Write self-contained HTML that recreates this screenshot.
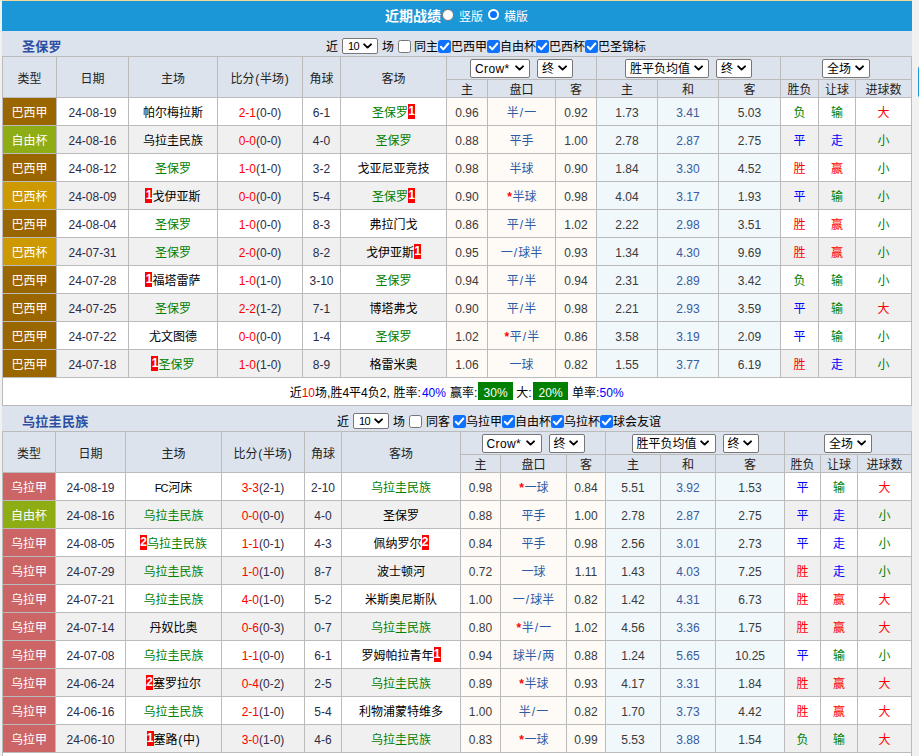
<!DOCTYPE html>
<html lang="zh-CN">
<head>
<meta charset="utf-8">
<title>近期战绩</title>
<style>
html,body{margin:0;padding:0;}
body{width:919px;height:756px;overflow:hidden;background:#f1f1f1;font-family:"Liberation Sans","Noto Sans CJK SC",sans-serif;font-size:12px;color:#000;position:relative;}
#wrap{position:absolute;left:2px;top:0;width:910px;background:#fff;}
#topline{height:1px;background:#f5d89c;}
#bar{height:30px;box-sizing:border-box;background:#1b96d7;border-top:1px solid #1b96d7;border-bottom:1px solid #1b96d7;color:#fff;position:relative;white-space:nowrap;}
#bar .bt{position:absolute;left:383px;top:5px;font-size:14px;font-weight:bold;line-height:18px;}
#bar .rl{position:absolute;top:7px;font-size:12px;line-height:16px;}
#bar .rd{position:absolute;top:6.5px;width:10px;height:10px;border-radius:50%;background:#fff;border:1px solid #767676;box-sizing:content-box;}
#bar .rd.on{top:7px;width:7.4px;height:7.4px;border:2px solid #fff;background:#0b6efd;}
.ttl{height:25px;background:#dce3ed;position:relative;white-space:nowrap;}
.ttl .tn{letter-spacing:.3px;position:absolute;left:20px;top:7px;font-size:13px;font-weight:bold;color:#2b4ea2;line-height:18px;}
.flt{position:absolute;top:2px;height:25px;display:flex;align-items:center;font-size:12px;}
#f1{left:324px;}
#f2{left:335px;}
.flt .f{line-height:16px;padding-top:2px;}
.sel{display:inline-block;box-sizing:border-box;height:19px;border:1px solid #767676;border-radius:2px;background:#fff;position:relative;vertical-align:middle;font-size:12px;color:#000;text-align:left;font-weight:normal;}
.sel .sv{position:absolute;left:4px;top:1px;line-height:17px;}
.sel .cv{position:absolute;right:5px;top:5.5px;}
.sel.s0{height:16px;margin:1px 4px 0 4px;}
.sel.s0 .sv{line-height:14px;left:5px;top:0;font-size:11px;letter-spacing:-0.6px;}
.sel.s0 .cv{top:4.2px;right:4.5px;}
.cb{margin-top:2px;display:inline-block;box-sizing:border-box;width:13px;height:13px;border:1px solid #767676;border-radius:2.5px;background:#fff;vertical-align:middle;flex:none;}
.cb.on{border:0;background:#0f72ff;}
.cb svg{display:block;}
.f2{margin-right:4px;}
.f3{margin-left:3px;}
#f2 .f3{margin-left:4px;margin-right:3px;}
table.t{table-layout:fixed;width:910px;border-spacing:1px;border-collapse:separate;background:#bbb;font-size:12px;}
table.t th,table.t td{padding:0;text-align:center;font-weight:normal;white-space:nowrap;overflow:hidden;}
table.t th{background:#dce3ed;color:#222;}
tr.h1{height:22px;}
tr.h2{height:17px;}
tr.h2 th{line-height:14px;padding-top:3px;}
th.sc .sel{margin:0 3.5px;}
tr.o,tr.e,tr.sum{height:27px;}
tr.o td{background:#fff;}
tr.e td{background:#f0f0f0;}
table.t td.p{background:#fefaf6;}
table.t td.q{background:#f0f8fc;}
table.t td.lg{color:#fff;}
td.dt,td.od,td.sco{color:#2c2c48;}
table.t td.dt,table.t td.od,table.t td.dr,table.t td.sco{padding-top:2px;}
td.od{color:#3a3a3a;}
td.hc{color:#2b5aa6;}
td.dr{color:#3a5a9c;}
.me{color:#008000;}
.r{color:#f00;}
.b{color:#00f;}
.g{color:#008000;}
.st{color:#f00;font-weight:bold;padding:0 .7px;}
.sl{padding:0 1px;}
i.rc{font-style:normal;background:#f00;color:#fff;font-weight:bold;display:inline-block;line-height:15px;height:15px;width:7px;padding:0;text-align:center;position:relative;top:-1.5px;}
tr.sum td{background:#fff;}
.bd{background:#008000;color:#fff;padding:4px 5.3px 0;}
#side{position:absolute;left:918px;top:67px;width:3px;height:30px;background:#1b96d7;border-radius:3px;}
.s1b{margin-right:.5px;}
.s1c{margin-right:1px;}
tr.sum .b{margin-right:.8px;}
.s1d{margin-right:.8px;}
.s1e{margin-right:1.7px;}
.s1f{margin-left:.8px;margin-right:.2px;}
.sel.s1 .sv{letter-spacing:.4px;}
.la{font-size:11px;letter-spacing:-1px;margin-right:1px;}
.pa{padding:0 .7px;}

</style>
</head>
<body>
<div id="wrap">
<div id="topline"></div>
<div id="bar"><span class="bt">近期战绩</span><span class="rd" style="left:439.5px"></span><span class="rl" style="left:457px">竖版</span><span class="rd on" style="left:486px"></span><span class="rl" style="left:502px">横版</span></div>
<div class="ttl"><span class="tn">圣保罗</span><div class="flt" id="f1"><span class="f">近</span><span class="sel s0" style="width:36px"><span class="sv">10</span><svg class="cv" viewBox="0 0 10 7" width="9.2" height="6.44"><path d="M1.3 1.5 L5 5 L8.7 1.5" fill="none" stroke="#000" stroke-width="2.1" stroke-linecap="round" stroke-linejoin="round"/></svg></span><span class="f f2">场</span><span class="cb"></span><span class="f f3">同主</span><span class="cb on"><svg viewBox="0 0 13 13" width="13" height="13"><path d="M2.8 6.8 L5.3 9.4 L10.3 3.5" fill="none" stroke="#fff" stroke-width="2" stroke-linecap="round" stroke-linejoin="round"/></svg></span><span class="f">巴西甲</span><span class="cb on"><svg viewBox="0 0 13 13" width="13" height="13"><path d="M2.8 6.8 L5.3 9.4 L10.3 3.5" fill="none" stroke="#fff" stroke-width="2" stroke-linecap="round" stroke-linejoin="round"/></svg></span><span class="f">自由杯</span><span class="cb on"><svg viewBox="0 0 13 13" width="13" height="13"><path d="M2.8 6.8 L5.3 9.4 L10.3 3.5" fill="none" stroke="#fff" stroke-width="2" stroke-linecap="round" stroke-linejoin="round"/></svg></span><span class="f">巴西杯</span><span class="cb on"><svg viewBox="0 0 13 13" width="13" height="13"><path d="M2.8 6.8 L5.3 9.4 L10.3 3.5" fill="none" stroke="#fff" stroke-width="2" stroke-linecap="round" stroke-linejoin="round"/></svg></span><span class="f">巴圣锦标</span></div></div>
<table class="t" id="t1" cellspacing="1" cellpadding="0">
<colgroup><col style="width:53px"><col style="width:71px"><col style="width:88px"><col style="width:84px"><col style="width:37px"><col style="width:105px"><col style="width:40px"><col style="width:67px"><col style="width:40px"><col style="width:60px"><col style="width:60px"><col style="width:61px"><col style="width:37px"><col style="width:36px"><col style="width:55px"></colgroup>
<tr class="h1">
<th rowspan="2">类型</th>
<th rowspan="2">日期</th>
<th rowspan="2">主场</th>
<th rowspan="2">比分<span class="pa">(</span>半场<span class="pa">)</span></th>
<th rowspan="2">角球</th>
<th rowspan="2">客场</th>
<th colspan="3" class="sc"><span class="sel s1" style="width:60px"><span class="sv">Crow*</span><svg class="cv" viewBox="0 0 10 7" width="9.2" height="6.44"><path d="M1.3 1.5 L5 5 L8.7 1.5" fill="none" stroke="#000" stroke-width="2.1" stroke-linecap="round" stroke-linejoin="round"/></svg></span><span class="sel s2" style="width:36px"><span class="sv">终</span><svg class="cv" viewBox="0 0 10 7" width="9.2" height="6.44"><path d="M1.3 1.5 L5 5 L8.7 1.5" fill="none" stroke="#000" stroke-width="2.1" stroke-linecap="round" stroke-linejoin="round"/></svg></span></th>
<th colspan="3" class="sc"><span class="sel s3" style="width:84px"><span class="sv">胜平负均值</span><svg class="cv" viewBox="0 0 10 7" width="9.2" height="6.44"><path d="M1.3 1.5 L5 5 L8.7 1.5" fill="none" stroke="#000" stroke-width="2.1" stroke-linecap="round" stroke-linejoin="round"/></svg></span><span class="sel s2" style="width:36px"><span class="sv">终</span><svg class="cv" viewBox="0 0 10 7" width="9.2" height="6.44"><path d="M1.3 1.5 L5 5 L8.7 1.5" fill="none" stroke="#000" stroke-width="2.1" stroke-linecap="round" stroke-linejoin="round"/></svg></span></th>
<th colspan="3" class="sc"><span class="sel s4" style="width:48px"><span class="sv">全场</span><svg class="cv" viewBox="0 0 10 7" width="9.2" height="6.44"><path d="M1.3 1.5 L5 5 L8.7 1.5" fill="none" stroke="#000" stroke-width="2.1" stroke-linecap="round" stroke-linejoin="round"/></svg></span></th>
</tr>
<tr class="h2"><th>主</th><th>盘口</th><th>客</th><th>主</th><th>和</th><th>客</th><th>胜负</th><th>让球</th><th>进球数</th></tr>
<tr class="o">
<td class="lg" style="background:#996600">巴西甲</td>
<td class="dt">24-08-19</td>
<td><span>帕尔梅拉斯</span></td>
<td class="sco"><span class="r">2-1</span>(0-0)</td>
<td class="dt">6-1</td>
<td><span class="me">圣保罗</span><i class="rc">1</i></td>
<td class="p od">0.96</td>
<td class="p hc">半<span class="sl">/</span>一</td>
<td class="p od">0.92</td>
<td class="q od">1.73</td>
<td class="q dr">3.41</td>
<td class="q od">5.03</td>
<td class="w g">负</td>
<td class="w g">输</td>
<td class="w r">大</td>
</tr>
<tr class="e">
<td class="lg" style="background:#8eac13">自由杯</td>
<td class="dt">24-08-16</td>
<td><span>乌拉圭民族</span></td>
<td class="sco"><span class="r">0-0</span>(0-0)</td>
<td class="dt">4-0</td>
<td><span class="me">圣保罗</span></td>
<td class="p od">0.88</td>
<td class="p hc">平手</td>
<td class="p od">1.00</td>
<td class="q od">2.78</td>
<td class="q dr">2.87</td>
<td class="q od">2.75</td>
<td class="w b">平</td>
<td class="w b">走</td>
<td class="w g">小</td>
</tr>
<tr class="o">
<td class="lg" style="background:#996600">巴西甲</td>
<td class="dt">24-08-12</td>
<td><span class="me">圣保罗</span></td>
<td class="sco"><span class="r">1-0</span>(1-0)</td>
<td class="dt">3-2</td>
<td><span>戈亚尼亚竞技</span></td>
<td class="p od">0.98</td>
<td class="p hc">半球</td>
<td class="p od">0.90</td>
<td class="q od">1.84</td>
<td class="q dr">3.30</td>
<td class="q od">4.52</td>
<td class="w r">胜</td>
<td class="w r">赢</td>
<td class="w g">小</td>
</tr>
<tr class="e">
<td class="lg" style="background:#cc9900">巴西杯</td>
<td class="dt">24-08-09</td>
<td><i class="rc">1</i><span>戈伊亚斯</span></td>
<td class="sco"><span class="r">0-0</span>(0-0)</td>
<td class="dt">5-4</td>
<td><span class="me">圣保罗</span><i class="rc">1</i></td>
<td class="p od">0.90</td>
<td class="p hc"><b class="st">*</b>半球</td>
<td class="p od">0.98</td>
<td class="q od">4.04</td>
<td class="q dr">3.17</td>
<td class="q od">1.93</td>
<td class="w b">平</td>
<td class="w g">输</td>
<td class="w g">小</td>
</tr>
<tr class="o">
<td class="lg" style="background:#996600">巴西甲</td>
<td class="dt">24-08-04</td>
<td><span class="me">圣保罗</span></td>
<td class="sco"><span class="r">1-0</span>(0-0)</td>
<td class="dt">8-3</td>
<td><span>弗拉门戈</span></td>
<td class="p od">0.86</td>
<td class="p hc">平<span class="sl">/</span>半</td>
<td class="p od">1.02</td>
<td class="q od">2.22</td>
<td class="q dr">2.98</td>
<td class="q od">3.51</td>
<td class="w r">胜</td>
<td class="w r">赢</td>
<td class="w g">小</td>
</tr>
<tr class="e">
<td class="lg" style="background:#cc9900">巴西杯</td>
<td class="dt">24-07-31</td>
<td><span class="me">圣保罗</span></td>
<td class="sco"><span class="r">2-0</span>(0-0)</td>
<td class="dt">8-2</td>
<td><span>戈伊亚斯</span><i class="rc">1</i></td>
<td class="p od">0.95</td>
<td class="p hc">一<span class="sl">/</span>球半</td>
<td class="p od">0.93</td>
<td class="q od">1.34</td>
<td class="q dr">4.30</td>
<td class="q od">9.69</td>
<td class="w r">胜</td>
<td class="w r">赢</td>
<td class="w g">小</td>
</tr>
<tr class="o">
<td class="lg" style="background:#996600">巴西甲</td>
<td class="dt">24-07-28</td>
<td><i class="rc">1</i><span>福塔雷萨</span></td>
<td class="sco"><span class="r">1-0</span>(1-0)</td>
<td class="dt">3-10</td>
<td><span class="me">圣保罗</span></td>
<td class="p od">0.94</td>
<td class="p hc">平<span class="sl">/</span>半</td>
<td class="p od">0.94</td>
<td class="q od">2.31</td>
<td class="q dr">2.89</td>
<td class="q od">3.42</td>
<td class="w g">负</td>
<td class="w g">输</td>
<td class="w g">小</td>
</tr>
<tr class="e">
<td class="lg" style="background:#996600">巴西甲</td>
<td class="dt">24-07-25</td>
<td><span class="me">圣保罗</span></td>
<td class="sco"><span class="r">2-2</span>(1-2)</td>
<td class="dt">7-1</td>
<td><span>博塔弗戈</span></td>
<td class="p od">0.90</td>
<td class="p hc">平<span class="sl">/</span>半</td>
<td class="p od">0.98</td>
<td class="q od">2.21</td>
<td class="q dr">2.93</td>
<td class="q od">3.59</td>
<td class="w b">平</td>
<td class="w g">输</td>
<td class="w r">大</td>
</tr>
<tr class="o">
<td class="lg" style="background:#996600">巴西甲</td>
<td class="dt">24-07-22</td>
<td><span>尤文图德</span></td>
<td class="sco"><span class="r">0-0</span>(0-0)</td>
<td class="dt">1-4</td>
<td><span class="me">圣保罗</span></td>
<td class="p od">1.02</td>
<td class="p hc"><b class="st">*</b>平<span class="sl">/</span>半</td>
<td class="p od">0.86</td>
<td class="q od">3.58</td>
<td class="q dr">3.19</td>
<td class="q od">2.09</td>
<td class="w b">平</td>
<td class="w g">输</td>
<td class="w g">小</td>
</tr>
<tr class="e">
<td class="lg" style="background:#996600">巴西甲</td>
<td class="dt">24-07-18</td>
<td><i class="rc">1</i><span class="me">圣保罗</span></td>
<td class="sco"><span class="r">1-0</span>(1-0)</td>
<td class="dt">8-9</td>
<td><span>格雷米奥</span></td>
<td class="p od">1.06</td>
<td class="p hc">一球</td>
<td class="p od">0.82</td>
<td class="q od">1.55</td>
<td class="q dr">3.77</td>
<td class="q od">6.19</td>
<td class="w r">胜</td>
<td class="w b">走</td>
<td class="w g">小</td>
</tr>
<tr class="sum"><td colspan="15"><span class="s1a">近<span class="r">10</span>场,</span><span class="s1b">胜4平4负2,</span> <span class="s1c">胜率:</span><span class="b">40%</span> <span class="s1d">赢率:</span><span class="bd">30%</span> <span class="s1e">大:</span><span class="bd">20%</span> <span class="s1f">单率:</span><span class="b">50%</span></td></tr>
</table>
<div class="ttl"><span class="tn">乌拉圭民族</span><div class="flt" id="f2"><span class="f">近</span><span class="sel s0" style="width:36px"><span class="sv">10</span><svg class="cv" viewBox="0 0 10 7" width="9.2" height="6.44"><path d="M1.3 1.5 L5 5 L8.7 1.5" fill="none" stroke="#000" stroke-width="2.1" stroke-linecap="round" stroke-linejoin="round"/></svg></span><span class="f f2">场</span><span class="cb"></span><span class="f f3">同客</span><span class="cb on"><svg viewBox="0 0 13 13" width="13" height="13"><path d="M2.8 6.8 L5.3 9.4 L10.3 3.5" fill="none" stroke="#fff" stroke-width="2" stroke-linecap="round" stroke-linejoin="round"/></svg></span><span class="f">乌拉甲</span><span class="cb on"><svg viewBox="0 0 13 13" width="13" height="13"><path d="M2.8 6.8 L5.3 9.4 L10.3 3.5" fill="none" stroke="#fff" stroke-width="2" stroke-linecap="round" stroke-linejoin="round"/></svg></span><span class="f">自由杯</span><span class="cb on"><svg viewBox="0 0 13 13" width="13" height="13"><path d="M2.8 6.8 L5.3 9.4 L10.3 3.5" fill="none" stroke="#fff" stroke-width="2" stroke-linecap="round" stroke-linejoin="round"/></svg></span><span class="f">乌拉杯</span><span class="cb on"><svg viewBox="0 0 13 13" width="13" height="13"><path d="M2.8 6.8 L5.3 9.4 L10.3 3.5" fill="none" stroke="#fff" stroke-width="2" stroke-linecap="round" stroke-linejoin="round"/></svg></span><span class="f">球会友谊</span></div></div>
<table class="t" id="t2" cellspacing="1" cellpadding="0">
<colgroup><col style="width:52px"><col style="width:69px"><col style="width:95px"><col style="width:82px"><col style="width:36px"><col style="width:118px"><col style="width:39px"><col style="width:65px"><col style="width:38px"><col style="width:54px"><col style="width:54px"><col style="width:68px"><col style="width:35px"><col style="width:36px"><col style="width:53px"></colgroup>
<tr class="h1">
<th rowspan="2">类型</th>
<th rowspan="2">日期</th>
<th rowspan="2">主场</th>
<th rowspan="2">比分<span class="pa">(</span>半场<span class="pa">)</span></th>
<th rowspan="2">角球</th>
<th rowspan="2">客场</th>
<th colspan="3" class="sc"><span class="sel s1" style="width:60px"><span class="sv">Crow*</span><svg class="cv" viewBox="0 0 10 7" width="9.2" height="6.44"><path d="M1.3 1.5 L5 5 L8.7 1.5" fill="none" stroke="#000" stroke-width="2.1" stroke-linecap="round" stroke-linejoin="round"/></svg></span><span class="sel s2" style="width:36px"><span class="sv">终</span><svg class="cv" viewBox="0 0 10 7" width="9.2" height="6.44"><path d="M1.3 1.5 L5 5 L8.7 1.5" fill="none" stroke="#000" stroke-width="2.1" stroke-linecap="round" stroke-linejoin="round"/></svg></span></th>
<th colspan="3" class="sc"><span class="sel s3" style="width:84px"><span class="sv">胜平负均值</span><svg class="cv" viewBox="0 0 10 7" width="9.2" height="6.44"><path d="M1.3 1.5 L5 5 L8.7 1.5" fill="none" stroke="#000" stroke-width="2.1" stroke-linecap="round" stroke-linejoin="round"/></svg></span><span class="sel s2" style="width:36px"><span class="sv">终</span><svg class="cv" viewBox="0 0 10 7" width="9.2" height="6.44"><path d="M1.3 1.5 L5 5 L8.7 1.5" fill="none" stroke="#000" stroke-width="2.1" stroke-linecap="round" stroke-linejoin="round"/></svg></span></th>
<th colspan="3" class="sc"><span class="sel s4" style="width:48px"><span class="sv">全场</span><svg class="cv" viewBox="0 0 10 7" width="9.2" height="6.44"><path d="M1.3 1.5 L5 5 L8.7 1.5" fill="none" stroke="#000" stroke-width="2.1" stroke-linecap="round" stroke-linejoin="round"/></svg></span></th>
</tr>
<tr class="h2"><th>主</th><th>盘口</th><th>客</th><th>主</th><th>和</th><th>客</th><th>胜负</th><th>让球</th><th>进球数</th></tr>
<tr class="o">
<td class="lg" style="background:#cc6666">乌拉甲</td>
<td class="dt">24-08-19</td>
<td><span><span class="la">FC</span>河床</span></td>
<td class="sco"><span class="r">3-3</span>(2-1)</td>
<td class="dt">2-10</td>
<td><span class="me">乌拉圭民族</span></td>
<td class="p od">0.98</td>
<td class="p hc"><b class="st">*</b>一球</td>
<td class="p od">0.84</td>
<td class="q od">5.51</td>
<td class="q dr">3.92</td>
<td class="q od">1.53</td>
<td class="w b">平</td>
<td class="w g">输</td>
<td class="w r">大</td>
</tr>
<tr class="e">
<td class="lg" style="background:#8eac13">自由杯</td>
<td class="dt">24-08-16</td>
<td><span class="me">乌拉圭民族</span></td>
<td class="sco"><span class="r">0-0</span>(0-0)</td>
<td class="dt">4-0</td>
<td><span>圣保罗</span></td>
<td class="p od">0.88</td>
<td class="p hc">平手</td>
<td class="p od">1.00</td>
<td class="q od">2.78</td>
<td class="q dr">2.87</td>
<td class="q od">2.75</td>
<td class="w b">平</td>
<td class="w b">走</td>
<td class="w g">小</td>
</tr>
<tr class="o">
<td class="lg" style="background:#cc6666">乌拉甲</td>
<td class="dt">24-08-05</td>
<td><i class="rc">2</i><span class="me">乌拉圭民族</span></td>
<td class="sco"><span class="r">1-1</span>(0-1)</td>
<td class="dt">4-3</td>
<td><span>佩纳罗尔</span><i class="rc">2</i></td>
<td class="p od">0.84</td>
<td class="p hc">平手</td>
<td class="p od">0.98</td>
<td class="q od">2.56</td>
<td class="q dr">3.01</td>
<td class="q od">2.73</td>
<td class="w b">平</td>
<td class="w b">走</td>
<td class="w g">小</td>
</tr>
<tr class="e">
<td class="lg" style="background:#cc6666">乌拉甲</td>
<td class="dt">24-07-29</td>
<td><span class="me">乌拉圭民族</span></td>
<td class="sco"><span class="r">1-0</span>(1-0)</td>
<td class="dt">8-7</td>
<td><span>波士顿河</span></td>
<td class="p od">0.72</td>
<td class="p hc">一球</td>
<td class="p od">1.11</td>
<td class="q od">1.43</td>
<td class="q dr">4.03</td>
<td class="q od">7.25</td>
<td class="w r">胜</td>
<td class="w b">走</td>
<td class="w g">小</td>
</tr>
<tr class="o">
<td class="lg" style="background:#cc6666">乌拉甲</td>
<td class="dt">24-07-21</td>
<td><span class="me">乌拉圭民族</span></td>
<td class="sco"><span class="r">4-0</span>(1-0)</td>
<td class="dt">5-2</td>
<td><span>米斯奥尼斯队</span></td>
<td class="p od">1.00</td>
<td class="p hc">一<span class="sl">/</span>球半</td>
<td class="p od">0.82</td>
<td class="q od">1.42</td>
<td class="q dr">4.31</td>
<td class="q od">6.73</td>
<td class="w r">胜</td>
<td class="w r">赢</td>
<td class="w r">大</td>
</tr>
<tr class="e">
<td class="lg" style="background:#cc6666">乌拉甲</td>
<td class="dt">24-07-14</td>
<td><span>丹奴比奥</span></td>
<td class="sco"><span class="r">0-6</span>(0-3)</td>
<td class="dt">0-7</td>
<td><span class="me">乌拉圭民族</span></td>
<td class="p od">0.80</td>
<td class="p hc"><b class="st">*</b>半<span class="sl">/</span>一</td>
<td class="p od">1.02</td>
<td class="q od">4.56</td>
<td class="q dr">3.36</td>
<td class="q od">1.75</td>
<td class="w r">胜</td>
<td class="w r">赢</td>
<td class="w r">大</td>
</tr>
<tr class="o">
<td class="lg" style="background:#cc6666">乌拉甲</td>
<td class="dt">24-07-08</td>
<td><span class="me">乌拉圭民族</span></td>
<td class="sco"><span class="r">1-1</span>(0-0)</td>
<td class="dt">6-1</td>
<td><span>罗姆帕拉青年</span><i class="rc">1</i></td>
<td class="p od">0.94</td>
<td class="p hc">球半<span class="sl">/</span>两</td>
<td class="p od">0.88</td>
<td class="q od">1.24</td>
<td class="q dr">5.65</td>
<td class="q od">10.25</td>
<td class="w b">平</td>
<td class="w g">输</td>
<td class="w g">小</td>
</tr>
<tr class="e">
<td class="lg" style="background:#cc6666">乌拉甲</td>
<td class="dt">24-06-24</td>
<td><i class="rc">2</i><span>塞罗拉尔</span></td>
<td class="sco"><span class="r">0-4</span>(0-2)</td>
<td class="dt">2-5</td>
<td><span class="me">乌拉圭民族</span></td>
<td class="p od">0.89</td>
<td class="p hc"><b class="st">*</b>半球</td>
<td class="p od">0.93</td>
<td class="q od">4.17</td>
<td class="q dr">3.31</td>
<td class="q od">1.84</td>
<td class="w r">胜</td>
<td class="w r">赢</td>
<td class="w r">大</td>
</tr>
<tr class="o">
<td class="lg" style="background:#cc6666">乌拉甲</td>
<td class="dt">24-06-16</td>
<td><span class="me">乌拉圭民族</span></td>
<td class="sco"><span class="r">2-1</span>(1-0)</td>
<td class="dt">5-4</td>
<td><span>利物浦蒙特维多</span></td>
<td class="p od">1.00</td>
<td class="p hc">半<span class="sl">/</span>一</td>
<td class="p od">0.82</td>
<td class="q od">1.70</td>
<td class="q dr">3.73</td>
<td class="q od">4.42</td>
<td class="w r">胜</td>
<td class="w r">赢</td>
<td class="w r">大</td>
</tr>
<tr class="e">
<td class="lg" style="background:#cc6666">乌拉甲</td>
<td class="dt">24-06-10</td>
<td><i class="rc">1</i><span>塞路<span class="pa">(</span>中<span class="pa">)</span></span></td>
<td class="sco"><span class="r">3-0</span>(1-0)</td>
<td class="dt">4-6</td>
<td><span class="me">乌拉圭民族</span></td>
<td class="p od">0.83</td>
<td class="p hc"><b class="st">*</b>一球</td>
<td class="p od">0.99</td>
<td class="q od">5.53</td>
<td class="q dr">3.88</td>
<td class="q od">1.54</td>
<td class="w g">负</td>
<td class="w g">输</td>
<td class="w r">大</td>
</tr>
<tr class="sum"><td colspan="15">&nbsp;</td></tr>
</table>
</div>
<div id="side"></div>
</body>
</html>
